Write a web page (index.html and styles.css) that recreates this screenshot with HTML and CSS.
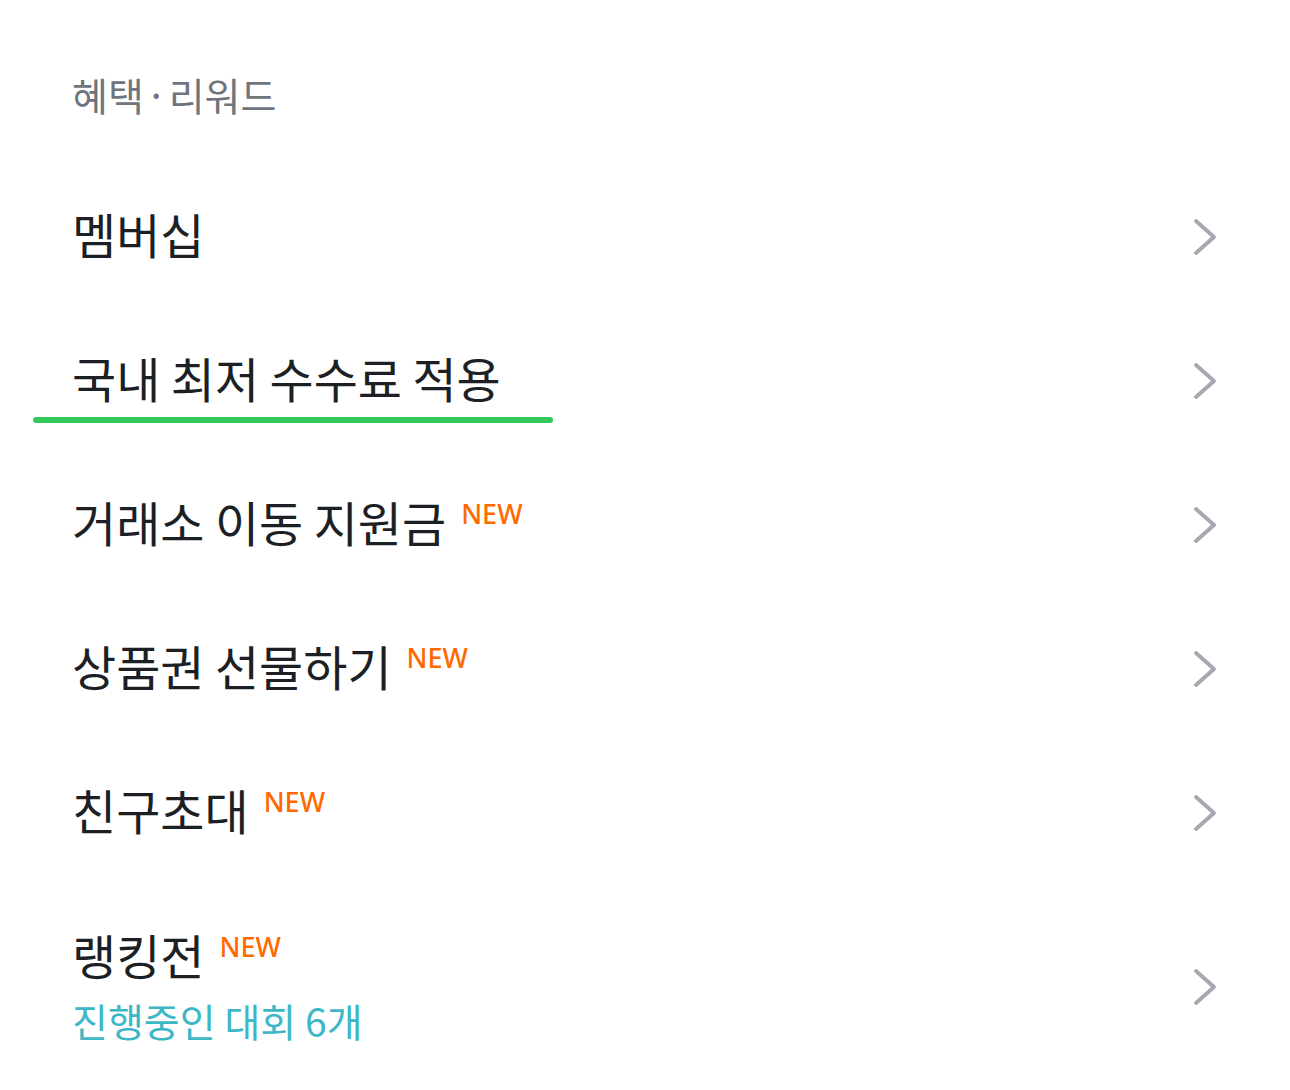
FILE: index.html
```html
<!DOCTYPE html>
<html lang="ko">
<head>
<meta charset="utf-8">
<title>혜택·리워드</title>
<link rel="stylesheet" href="styles.css">
</head>
<body>
<div class="page">
  <div class="section-title">혜택<span class="dot">·</span>리워드</div>
  <ul class="menu">
    <li class="row">
      <div class="label"><span class="text">멤버십</span></div>
      <svg class="chev" viewBox="0 0 26 40" width="26" height="40"><polyline points="4,4 22,20 4,36"/></svg>
    </li>
    <li class="row highlighted">
      <div class="label"><span class="text">국내 최저 수수료 적용</span></div>
      <svg class="chev" viewBox="0 0 26 40" width="26" height="40"><polyline points="4,4 22,20 4,36"/></svg>
      <span class="bar"></span>
    </li>
    <li class="row">
      <div class="label"><span class="text">거래소 이동 지원금</span><span class="new">NEW</span></div>
      <svg class="chev" viewBox="0 0 26 40" width="26" height="40"><polyline points="4,4 22,20 4,36"/></svg>
    </li>
    <li class="row">
      <div class="label"><span class="text">상품권 선물하기</span><span class="new">NEW</span></div>
      <svg class="chev" viewBox="0 0 26 40" width="26" height="40"><polyline points="4,4 22,20 4,36"/></svg>
    </li>
    <li class="row">
      <div class="label"><span class="text">친구초대</span><span class="new">NEW</span></div>
      <svg class="chev" viewBox="0 0 26 40" width="26" height="40"><polyline points="4,4 22,20 4,36"/></svg>
    </li>
    <li class="row tall">
      <div class="stack">
        <div class="label"><span class="text">랭킹전</span><span class="new">NEW</span></div>
        <div class="sub">진행중인 대회 6개</div>
      </div>
      <svg class="chev" viewBox="0 0 26 40" width="26" height="40"><polyline points="4,4 22,20 4,36"/></svg>
    </li>
  </ul>
</div>
</body>
</html>
```
FILE: styles.css
```css
* { box-sizing: border-box; }
html, body { margin: 0; padding: 0; background: #ffffff; }
body {
  font-family: "Noto Sans CJK KR", "Noto Sans", sans-serif;
  color: #1c1f24;
}
.page {
  width: 1290px;
  padding: 0 72px 0 72px;
}
.section-title {
  height: 165px;
  padding-top: 69px;
  font-size: 39px;
  line-height: 50px;
  color: #6f757c;
}
.dot {
  margin: 0 7px;
}
.menu {
  list-style: none;
  margin: 0;
  padding: 0;
}
.row {
  position: relative;
  height: 144px;
  display: flex;
  align-items: center;
  justify-content: space-between;
}
.row.tall {
  height: 204px;
}
.label {
  display: flex;
  align-items: flex-start;
  padding-bottom: 8px;
}
.text {
  font-size: 48px;
  line-height: 64px;
  word-spacing: -3px;
}
.new {
  font-family: "Noto Sans", sans-serif;
  font-size: 27px;
  line-height: 27px;
  font-weight: 500;
  color: #ff6a00;
  margin-left: 15px;
  margin-top: 11px;
}
.stack {
  display: flex;
  flex-direction: column;
  gap: 9px;
  padding-bottom: 7px;
}
.stack .label {
  padding-bottom: 0;
}
.sub {
  font-size: 39px;
  line-height: 50px;
  word-spacing: -2px;
  color: #3db7c6;
}
.chev {
  display: block;
  flex: none;
}
.chev polyline {
  fill: none;
  stroke: #a6aab0;
  stroke-width: 4;
  stroke-linecap: round;
  stroke-linejoin: round;
}
.bar {
  position: absolute;
  left: -39px;
  top: 108px;
  width: 520px;
  height: 6px;
  border-radius: 3px;
  background: #34c759;
}
```
